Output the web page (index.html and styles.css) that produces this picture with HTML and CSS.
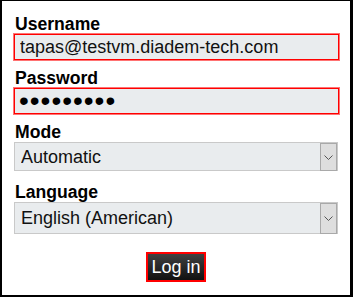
FILE: index.html
```html
<!DOCTYPE html>
<html lang="en">
<head>
<meta charset="UTF-8">
<title>Log in</title>
<link rel="stylesheet" href="styles.css">
</head>
<body>
	<div class="login">
		<div class="group">
			<label class="lbl" for="user">Username</label>
			<input class="field err" id="user" type="text" value="tapas@testvm.diadem-tech.com">
		</div>
		<div class="group">
			<label class="lbl" for="pass">Password</label>
			<input class="field err pw" id="pass" type="password" value="123456789">
		</div>
		<div class="group mode">
			<label class="lbl" for="mode">Mode</label>
			<div class="sel">
				<select id="mode">
					<option>Automatic</option>
				</select>
				<span class="arrow"><svg width="9" height="5" viewBox="0 0 9 5"><path d="M0.5 0.5 L4.5 4.5 L8.5 0.5" fill="none" stroke="#555" stroke-width="1"/></svg></span>
			</div>
		</div>
		<div class="group lang">
			<label class="lbl" for="lang">Language</label>
			<div class="sel">
				<select id="lang">
					<option>English (American)</option>
				</select>
				<span class="arrow"><svg width="9" height="5" viewBox="0 0 9 5"><path d="M0.5 0.5 L4.5 4.5 L8.5 0.5" fill="none" stroke="#555" stroke-width="1"/></svg></span>
			</div>
		</div>
		<div class="actions">
			<button class="btn" type="button">Log in</button>
		</div>
	</div>
</body>
</html>
```

FILE: styles.css
```css
body {margin: 0;background-color: #fff;font-family: "Liberation Sans", Arial, sans-serif;}
.login {width: 353px;height: 297px;box-sizing: border-box;border: solid #000;border-width: 1px 3px 2px 2px;padding: 14px 12px 0 12px;}
.group {display: flex;flex-direction: column;margin-bottom: 9px;}
.lbl {display: block;font-size: 17.6px;font-weight: bold;line-height: 18px;color: #000;margin-left: 1px;}
.field {box-sizing: border-box;width: 325px;height: 26px;margin: 1px 0 0 0;padding: 0 5px;border: 1px solid #f00;box-shadow: 0 0 0 1px rgba(255,0,0,0.55);background-color: #e9ecee;font-family: "Liberation Sans", Arial, sans-serif;font-size: 18px;color: #111;outline: none;}
.pw {font-size: 28px;letter-spacing: 1px;padding-left: 4px;color: #000;}
.mode {margin-top: 1px;margin-bottom: 12px;}
.sel {position: relative;width: 324px;margin-top: 1px;}
.sel select {display: block;box-sizing: border-box;width: 324px;height: 29px;margin: 0;padding: 0 0 0 6px;border: 1px solid #c9c9c9;border-radius: 0;background-color: #e9ecee;font-family: "Liberation Sans", Arial, sans-serif;font-size: 18px;color: #111;appearance: none;-webkit-appearance: none;outline: none;}
.lang select {height: 32px;}
.sel .arrow {position: absolute;top: 1px;bottom: 0;right: 1px;width: 17px;box-sizing: border-box;border: 1px solid #a9a9a9;background-color: #dedede;display: flex;align-items: center;justify-content: center;}
.actions {text-align: center;margin-top: 18px;}
.btn {box-sizing: border-box;width: 60px;height: 30px;padding: 0 3px;border: 2px solid #f00;border-radius: 0;background: linear-gradient(#404040, #111);color: #fff;font-family: "Liberation Sans", Arial, sans-serif;font-size: 18px;cursor: pointer;}
```
